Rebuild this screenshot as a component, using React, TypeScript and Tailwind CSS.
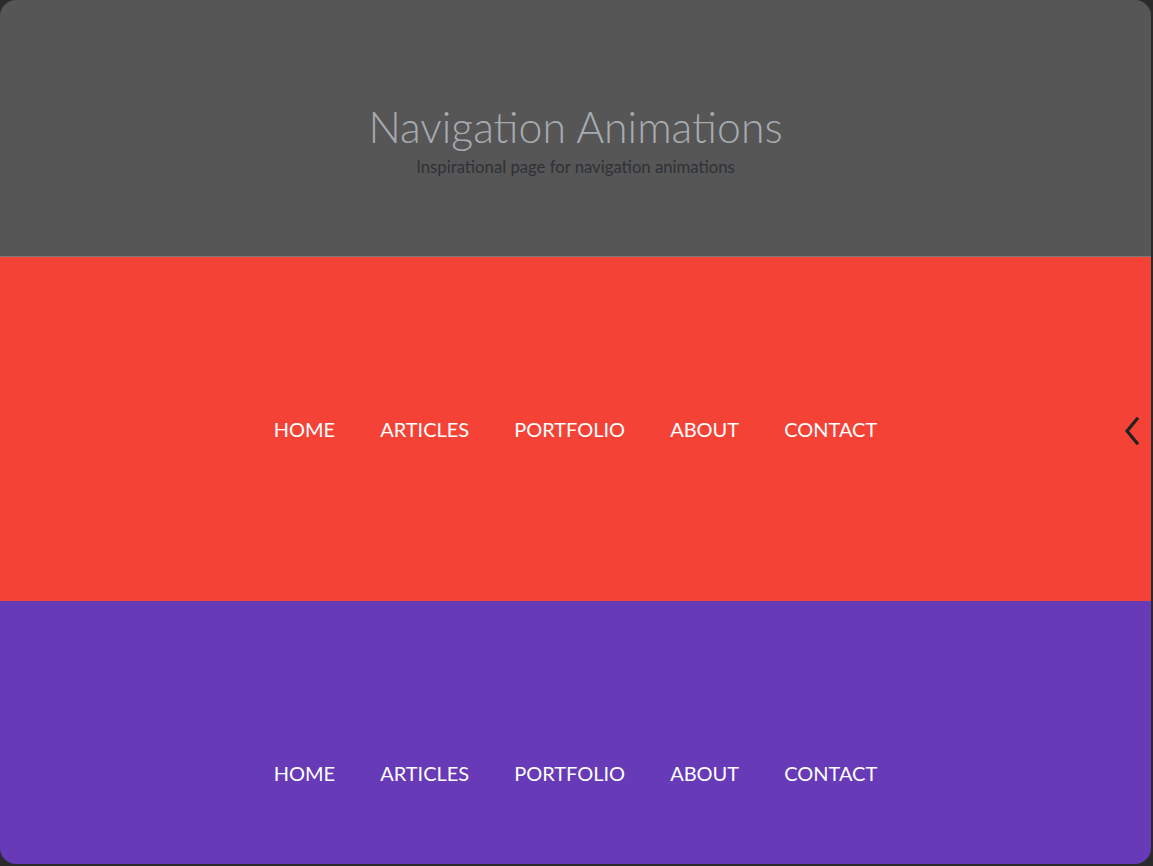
const links = ['Home', 'Articles', 'Portfolio', 'About', 'Contact'];

function NavBar() {
  return (
    <ul className="flex items-center justify-center gap-[45px] uppercase text-white text-[20px] leading-none">
      {links.map((l) => (
        <li key={l}>
          <a href="#" className="block py-1">{l}</a>
        </li>
      ))}
    </ul>
  );
}

export default function App() {
  return (
    <div className="h-[866px] w-full bg-[#2b2b2b] overflow-hidden" style={{ fontFamily: 'Lato, "Open Sans", sans-serif' }}>
      <div className="h-[864px] mr-[2px] rounded-2xl overflow-hidden flex flex-col">
        <header className="h-[257px] shrink-0 bg-[#565656] border-b border-[#7a7a7a] flex flex-col items-center justify-center pt-[26px]">
          <h1 className="text-[42.8px] font-light leading-none text-[#a7abb0]">Navigation Animations</h1>
          <p className="mt-[10px] text-[16.7px] leading-none text-[#2e3236]">Inspirational page for navigation animations</p>
        </header>
        <section className="h-[344px] shrink-0 bg-[#f44336] flex items-center justify-center relative">
          <NavBar />
          <svg className="absolute right-[11px] top-[160px] text-[#222222]" width="16" height="28" viewBox="0 0 16 28" fill="none" stroke="currentColor" strokeWidth="3.2" strokeLinecap="square">
            <polyline points="13,2 3,14 13,26" />
          </svg>
        </section>
        <section className="h-[344px] shrink-0 bg-[#673ab7] flex items-center justify-center">
          <NavBar />
        </section>
      </div>
    </div>
  );
}
